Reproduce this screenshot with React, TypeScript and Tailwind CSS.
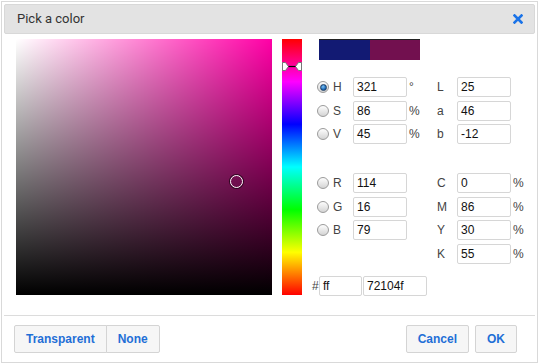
import React from 'react';

const sans = { fontFamily: '"Liberation Sans", Arial, sans-serif' };

function Radio({ checked }: { checked?: boolean }) {
  return (
    <span className="flex h-[12px] w-[12px] items-center justify-center rounded-full border border-[#9b9b9b] bg-[linear-gradient(to_bottom,#fdfdfd,#d4d4d4)]">
      {checked && (
        <span className="h-[7px] w-[7px] rounded-full border border-[#1d3f66] bg-[radial-gradient(circle_at_40%_35%,#7fc3f5,#1c6ab8_60%,#14457c)]" />
      )}
    </span>
  );
}

function Field({ value, w = 'w-[54px]' }: { value: string; w?: string }) {
  return (
    <div
      className={`${w} flex h-5 items-center rounded-[2px] border border-[#d6d6d6] bg-white pl-[3px] text-[12px] text-[#111]`}
    >
      {value}
    </div>
  );
}

type Row = {
  radio?: string;
  checked?: boolean;
  value?: string;
  unit?: string;
  label2: string;
  value2: string;
  unit2?: string;
};

function FieldRow({ row }: { row: Row }) {
  return (
    <div className="flex h-5 items-center text-[12px] text-[#444]">
      <div className="flex w-[21px] pl-[5px]">{row.radio && <Radio checked={row.checked} />}</div>
      <div className="w-[20px]">{row.radio}</div>
      {row.value !== undefined ? <Field value={row.value} /> : <div className="w-[54px]" />}
      <div className="w-[30px] pl-[2px]">{row.unit}</div>
      <div className="w-[20px]">{row.label2}</div>
      <Field value={row.value2} />
      <div className="pl-[2px]">{row.unit2}</div>
    </div>
  );
}

const hsv: Row[] = [
  { radio: 'H', checked: true, value: '321', unit: '°', label2: 'L', value2: '25' },
  { radio: 'S', value: '86', unit: '%', label2: 'a', value2: '46' },
  { radio: 'V', value: '45', unit: '%', label2: 'b', value2: '-12' },
];

const rgb: Row[] = [
  { radio: 'R', value: '114', label2: 'C', value2: '0', unit2: '%' },
  { radio: 'G', value: '16', label2: 'M', value2: '86', unit2: '%' },
  { radio: 'B', value: '79', label2: 'Y', value2: '30', unit2: '%' },
  { label2: 'K', value2: '55', unit2: '%' },
];

function Btn({ children, className = '' }: { children: React.ReactNode; className?: string }) {
  return (
    <button
      className={`h-7 border border-[#d4d4d4] bg-[#f6f6f6] px-[11px] text-[12px] font-bold text-[#1f6fd6] ${className}`}
    >
      {children}
    </button>
  );
}

export default function App() {
  return (
    <div className="h-[364px] w-[539px] bg-white p-px" style={sans}>
      <div className="flex h-[362px] w-[537px] flex-col border border-[#d9d9d9] p-[2px]">
        {/* title */}
        <div className="flex h-[30px] items-center justify-between rounded-[2px] border border-[#d8d8d8] bg-[#e3e3e3] pl-[12px] pr-[11px]">
          <span className="text-[13px] text-[#333]" style={{ fontFamily: 'Roboto, sans-serif' }}>
            Pick a color
          </span>
          <svg width="10" height="10" viewBox="0 0 10 10">
            <path d="M1.5 1.5 L8.5 8.5 M8.5 1.5 L1.5 8.5" stroke="#1a73e8" strokeWidth="2.6" strokeLinecap="square" />
          </svg>
        </div>

        {/* body */}
        <div className="flex h-[281px] pl-[12px] pt-[5px]">
          <div className="relative h-64 w-64 bg-[#ff00a6]">
            <div className="absolute inset-0 bg-[linear-gradient(to_right,#fff,rgba(255,255,255,0))]" />
            <div className="absolute inset-0 bg-[linear-gradient(to_bottom,rgba(0,0,0,0),#000)]" />
            <div className="absolute left-[214px] top-[136px] h-[13px] w-[13px] rounded-full border-[1.5px] border-white shadow-[0_0_0_1px_rgba(0,0,0,0.6)]" />
          </div>

          <div className="relative ml-[10px] h-64 w-5 bg-[linear-gradient(to_bottom,#f00_0%,#f0f_16.7%,#00f_33.3%,#0ff_50%,#0f0_66.7%,#ff0_83.3%,#f00_100%)]">
            <svg className="absolute left-0 top-[23px]" width="20" height="9" viewBox="0 0 20 9">
              <path d="M0.5 0.5 L3.5 0.5 L6.5 4.5 L3.5 8.5 L0.5 8.5 Z" fill="#fff" stroke="#777" />
              <path d="M19.5 0.5 L16.5 0.5 L13.5 4.5 L16.5 8.5 L19.5 8.5 Z" fill="#fff" stroke="#777" />
              <path d="M6.5 4.5 L13.5 4.5" stroke="#000" strokeWidth="1.2" />
            </svg>
          </div>

          <div className="ml-[10px] flex flex-col">
            <div className="ml-[7px] flex h-[21px] w-[101px] border-t border-[#222]">
              <div className="flex-1 bg-[#121a73]" />
              <div className="flex-1 bg-[#72104f]" />
            </div>

            <div className="mt-[17px] flex flex-col gap-[3.5px]">
              {hsv.map((r) => (
                <FieldRow key={r.label2} row={r} />
              ))}
            </div>

            <div className="mt-[29px] flex flex-col gap-[3.5px]">
              {rgb.map((r) => (
                <FieldRow key={r.label2} row={r} />
              ))}
            </div>

            <div className="mt-[12.5px] flex h-5 items-center text-[12px] text-[#444]">
              <span className="w-[7px]">#</span>
              <Field value="ff" w="w-[43px]" />
              <div className="ml-px">
                <Field value="72104f" w="w-[64px]" />
              </div>
            </div>
          </div>
        </div>

        {/* footer */}
        <div className="flex flex-1 items-start justify-between border-t border-[#dcdcdc] pl-[10px] pr-[18px] pt-[9px]">
          <div className="flex">
            <Btn className="rounded-l-[2px]">Transparent</Btn>
            <Btn className="-ml-px rounded-r-[2px]">None</Btn>
          </div>
          <div className="flex gap-[6px]">
            <Btn className="rounded-[2px]">Cancel</Btn>
            <Btn className="rounded-[2px]">OK</Btn>
          </div>
        </div>
      </div>
    </div>
  );
}
